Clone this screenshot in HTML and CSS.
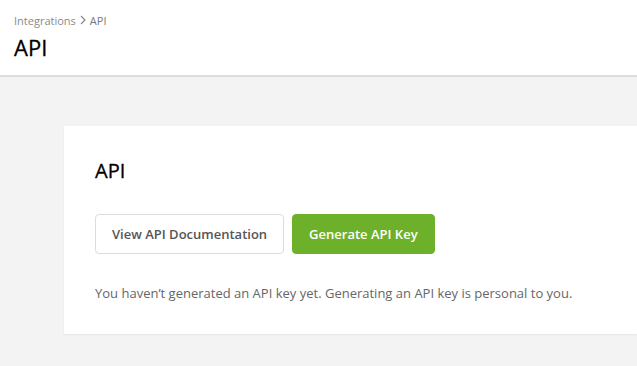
FILE: index.html
```html
<!DOCTYPE html>
<html lang="en">
<head>
    <meta charset="UTF-8">
    <title>API</title>
    <link rel="stylesheet" href="styles.css">
</head>
<body>
    <header class="topbar">
        <div class="breadcrumb">
            <a href="#">Integrations</a>
            <svg class="chevron" width="8" height="10" viewBox="0 0 8 10"><path d="M2 1l4 4-4 4" fill="none" stroke="#8a8a8a" stroke-width="1.2"/></svg>
            <span>API</span>
        </div>
        <h1>API</h1>
    </header>
    <main class="page">
        <section class="card">
            <h2>API</h2>
            <div class="actions">
                <button class="btn btn-outline">View API Documentation</button>
                <button class="btn btn-green">Generate API Key</button>
            </div>
            <p class="note">You haven’t generated an API key yet. Generating an API key is personal to you.</p>
        </section>
    </main>
</body>
</html>
```

FILE: styles.css
```css
body {
    margin: 0;
    font-family: "Open Sans", sans-serif;
    background: #f2f3f2;
    overflow: hidden;
    height: 366px;
}
.topbar {
    background: #fff;
    height: 77px;
    border-bottom: 2px solid #dcdddc;
    padding: 12px 14px 0;
    box-sizing: border-box;
}
.breadcrumb {
    font-size: 11px;
    color: #8a8a8a;
    display: flex;
    align-items: center;
    gap: 3px;
    height: 16px;
}
.breadcrumb a {
    color: #8a8a8a;
    text-decoration: none;
}
.breadcrumb span {
    color: #777;
}
.topbar h1 {
    margin: 5px 0 0;
    font-size: 22px;
    font-weight: 400;
    color: #000;
    line-height: 28px;
    -webkit-text-stroke: 0.3px #000;
}
.page {
    padding: 49px 0 0 64px;
}
.card {
    background: #fff;
    height: 208px;
    box-sizing: border-box;
    padding: 33px 31px 0;
    box-shadow: 0 1px 2px rgba(0,0,0,0.06);
}
.card h2 {
    margin: 0;
    font-size: 20px;
    font-weight: 400;
    color: #000;
    line-height: 24px;
    -webkit-text-stroke: 0.3px #000;
}
.actions {
    display: flex;
    gap: 8px;
    margin-top: 31px;
}
.btn {
    font-family: "Open Sans", sans-serif;
    font-size: 13px;
    font-weight: 600;
    height: 40px;
    border-radius: 4px;
    padding: 0 16px;
    cursor: pointer;
}
.btn-outline {
    background: #fff;
    border: 1px solid #dcdcdc;
    color: #555;
}
.btn-green {
    background: #6db12b;
    border: 1px solid #6db12b;
    color: #fff;
}
.note {
    margin: 30px 0 0;
    font-size: 13px;
    color: #666;
}
```
